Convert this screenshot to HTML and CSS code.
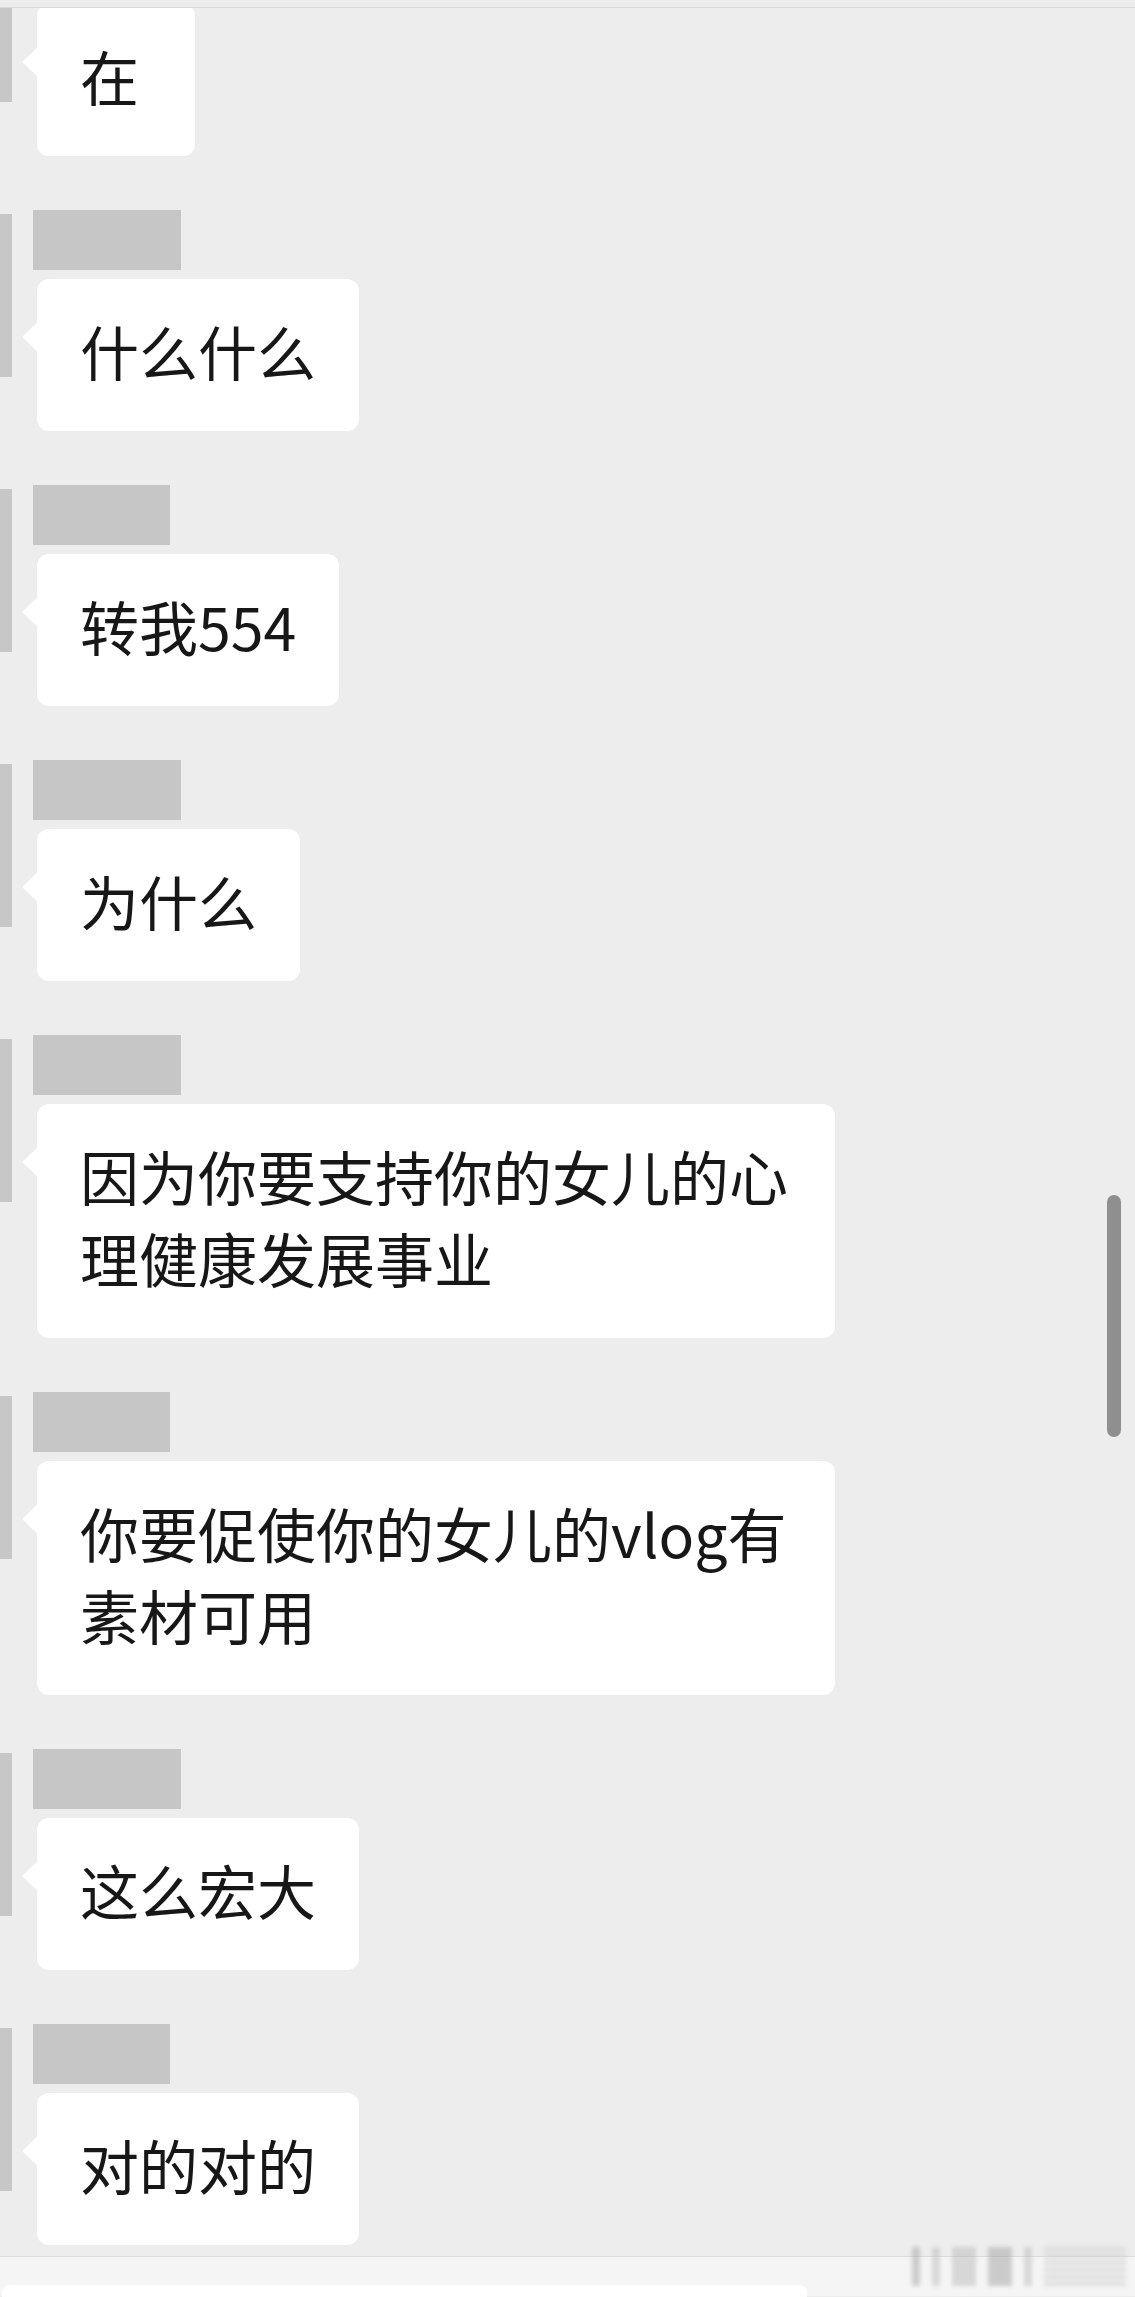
FILE: index.html
```html
<!DOCTYPE html>
<html lang="zh-CN">
<head>
    <meta charset="UTF-8">
    <meta name="viewport" content="width=device-width, initial-scale=1.0">
    <title>聊天记录</title>
    <link rel="stylesheet" href="styles.css">
</head>
<body>
<div class="phone">
    <div class="topbar"></div>

    <div class="chat">
        <div class="thread">
            <div class="msg">
                <div class="avatar"></div>
                <div class="body">
                    <div class="name"></div>
                    <div class="bubble">在</div>
                </div>
            </div>
            <div class="msg">
                <div class="avatar"></div>
                <div class="body">
                    <div class="name"></div>
                    <div class="bubble">什么什么</div>
                </div>
            </div>
            <div class="msg">
                <div class="avatar"></div>
                <div class="body">
                    <div class="name short"></div>
                    <div class="bubble">转我554</div>
                </div>
            </div>
            <div class="msg">
                <div class="avatar"></div>
                <div class="body">
                    <div class="name"></div>
                    <div class="bubble">为什么</div>
                </div>
            </div>
            <div class="msg">
                <div class="avatar"></div>
                <div class="body">
                    <div class="name"></div>
                    <div class="bubble">因为你要支持你的女儿的心理健康发展事业</div>
                </div>
            </div>
            <div class="msg">
                <div class="avatar"></div>
                <div class="body">
                    <div class="name short"></div>
                    <div class="bubble">你要促使你的女儿的vlog有素材可用</div>
                </div>
            </div>
            <div class="msg">
                <div class="avatar"></div>
                <div class="body">
                    <div class="name"></div>
                    <div class="bubble">这么宏大</div>
                </div>
            </div>
            <div class="msg">
                <div class="avatar"></div>
                <div class="body">
                    <div class="name short"></div>
                    <div class="bubble">对的对的</div>
                </div>
            </div>
        </div>
        <div class="scrollbar"></div>
    </div>

    <div class="footer">
        <div class="input"></div>
        <div class="watermark">
            <span class="wm-bar dark"></span>
            <span class="wm-bar"></span>
            <span class="wm-bar wide"></span>
            <span class="wm-bar wide dark"></span>
            <span class="wm-bar"></span>
            <span class="wm-bar hatch"></span>
        </div>
    </div>
</div>
</body>
</html>
```

FILE: styles.css
```css
* {
    margin: 0;
    padding: 0;
    box-sizing: border-box;
}

body {
    background: #ededed;
    font-family: "Noto Sans CJK SC", "Noto Sans", sans-serif;
    color: #171717;
}

.phone {
    width: 1135px;
    height: 2297px;
    overflow: hidden;
    background: #ededed;
}

.topbar {
    height: 8px;
    background: #ececec;
    border-bottom: 1px solid #d9d9d9;
}

.chat {
    position: relative;
    height: 2249px;
    overflow: hidden;
    border-bottom: 1px solid #dcdcdc;
}

/* first message is half scrolled away under the top bar */
.thread {
    margin-top: -73px;
}

.msg {
    display: flex;
    align-items: flex-start;
    gap: 21px;
    margin-bottom: 54px;
}

.avatar {
    flex: none;
    width: 12px;
    height: 163px;
    margin-top: 4px;
    background: #c7c7c7;
}

.body {
    display: flex;
    flex-direction: column;
    align-items: flex-start;
    gap: 9px;
}

.name {
    width: 148px;
    height: 60px;
    background: #c6c6c6;
}

.name.short {
    width: 137px;
}

.bubble {
    position: relative;
    margin-left: 4px;
    min-width: 158px;
    max-width: 798px;
    padding: 31px 43px 39px;
    background: #fff;
    border-radius: 12px;
    font-size: 59px;
    line-height: 82px;
}

.bubble::before {
    content: "";
    position: absolute;
    left: -15px;
    top: 43px;
    border-top: 15px solid transparent;
    border-bottom: 15px solid transparent;
    border-right: 16px solid #fff;
}

.scrollbar {
    position: absolute;
    top: 1187px;
    right: 14px;
    width: 14px;
    height: 242px;
    border-radius: 7px;
    background: #8f8f8f;
}

.footer {
    position: relative;
    height: 39px;
    padding-top: 28px;
    background: #f5f5f5;
}

.input {
    width: 805px;
    height: 40px;
    margin-left: 2px;
    background: #fff;
    border-radius: 8px 8px 0 0;
}

.watermark {
    position: absolute;
    top: -10px;
    right: 9px;
    width: 214px;
    height: 39px;
    display: flex;
    gap: 12px;
    filter: blur(2px);
    opacity: 0.45;
}

.wm-bar {
    width: 8px;
    background: #b4b4b4;
}

.wm-bar.dark {
    background: #9a9a9a;
}

.wm-bar.wide {
    width: 24px;
}

.wm-bar.hatch {
    flex: 1;
    background: repeating-linear-gradient(180deg, #c4c4c4 0 4px, #e6e6e6 4px 7px);
}
```
